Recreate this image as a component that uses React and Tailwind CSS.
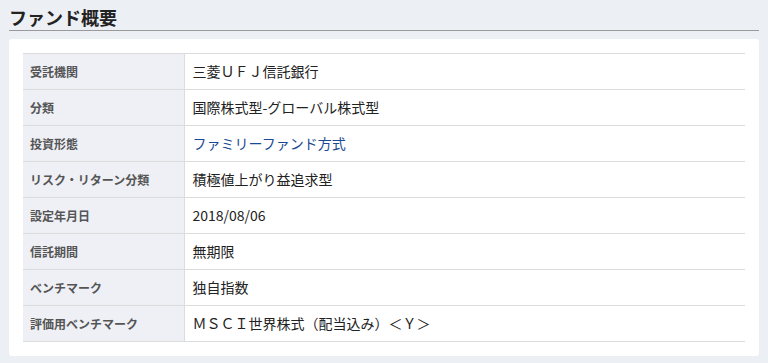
import React from "react";

const rows = [
	{ label: "受託機関", value: "三菱ＵＦＪ信託銀行" },
	{ label: "分類", value: "国際株式型-グローバル株式型" },
	{ label: "投資形態", value: "ファミリーファンド方式", link: true },
	{ label: "リスク・リターン分類", value: "積極値上がり益追求型" },
	{ label: "設定年月日", value: "2018/08/06" },
	{ label: "信託期間", value: "無期限" },
	{ label: "ベンチマーク", value: "独自指数" },
	{ label: "評価用ベンチマーク", value: "ＭＳＣＩ世界株式（配当込み）＜Ｙ＞" },
];

export default function App() {
	return (
		<main
			className="min-h-[363px] bg-[#eceff3] px-[9px] pt-[6px] pb-[8px]"
			style={{ fontFamily: '"Noto Sans CJK JP", "Noto Sans", sans-serif' }}
		>
			{/* HEADING */}
			<h2 className="border-b border-[#9a9a9a] pb-[1px] text-[18px] font-bold leading-[23px] text-[#222]">
				ファンド概要
			</h2>
			{/* SUMMARY CARD */}
			<section className="mt-[8px] rounded-[3px] bg-white p-[14px]">
				<table className="w-full border-collapse">
					<tbody>
						{rows.map((row) => (
							<tr key={row.label} className="h-[36px] border-y border-[#dcdcdc]">
								<th className="w-[161px] border-r border-[#dcdcdc] bg-[#eef0f5] pl-[7px] text-left align-middle text-[12px] font-bold text-[#555]">
									{row.label}
								</th>
								<td
									className={
										row.link
											? "pl-[8px] align-middle text-[14px] text-[#1b4a94]"
											: "pl-[8px] align-middle text-[14px] text-[#222]"
									}
								>
									{row.value}
								</td>
							</tr>
						))}
					</tbody>
				</table>
			</section>
		</main>
	);
}
